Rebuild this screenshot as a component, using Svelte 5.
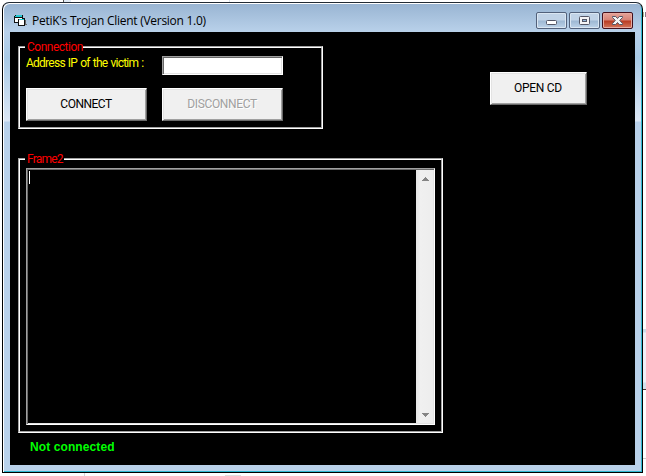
<script>
  const status = 'Not connected';
  let address = $state('');
</script>

<div class="desktop">
  <i class="scrap" style="left:63px;top:0;width:1px;height:3px;background:#555"></i>
  <i class="scrap" style="left:64px;top:0;width:7px;height:3px;background:#e0eaf4"></i>
  <i class="scrap" style="left:229px;top:0;width:1px;height:3px;background:#dce4ee"></i>
  <i class="scrap" style="left:643px;top:12px;width:1px;height:5px;background:#a9bd9b"></i>
  <i class="scrap" style="left:645px;top:12px;width:1px;height:5px;background:#8c7588"></i>
  <i class="scrap" style="left:643px;top:329px;width:3px;height:60px;background:linear-gradient(#cbdce9 0 3px,#f0f0f8 4px 53px,#d3e0ec 54px)"></i>
  <i class="scrap" style="left:643px;top:389px;width:3px;height:1px;background:#433"></i>
  <i class="scrap" style="left:643px;top:458px;width:3px;height:1px;background:#ccc"></i>
  <i class="scrap" style="left:84px;top:473px;width:1px;height:3px;background:#d5d5dc"></i>
  <i class="scrap" style="left:225px;top:475px;width:16px;height:1px;background:#ddd"></i>

  <div class="window">
    <header>
      <svg class="app-icon" width="14" height="14" viewBox="0 0 14 14" shape-rendering="crispEdges">
        <path d="M1 1h8v3h2v8H4V9H0V2h1z" fill="#111" />
        <path d="M2 1h6v1H2zM1 2h7v1H1z" fill="#22c9d4" />
        <path d="M1 4h7v1H4v3H1z" fill="#fff" />
        <path d="M5 5h5v1H5z" fill="#22c9d4" />
        <path d="M5 6h5v5H5z" fill="#fff" />
        <path d="M11 6h1v5h-1zM12 10h1v1h-1z" fill="#666" />
      </svg>
      <span class="title">PetiK's Trojan Client (Version 1.0)</span>
      <div class="controls">
        <button aria-label="Minimize">
          <svg width="31" height="17"><rect x="10.5" y="8.5" width="10" height="4" rx="1" fill="#fff" stroke="#535666" /></svg>
        </button>
        <button aria-label="Maximize">
          <svg width="31" height="17"><rect x="10.5" y="4.5" width="10" height="8" rx="1" fill="#f4f4f6" stroke="#535666" /><rect x="13.5" y="7.5" width="4" height="2" fill="#91b5d8" stroke="#535666" /></svg>
        </button>
        <button class="close" aria-label="Close">
          <svg width="31" height="17"><path d="M10.5 4.5h3.2l1.8 2 1.8-2h3.2v1L17.7 8.4l2.8 3.1v1h-3.2l-1.8-2-1.8 2h-3.2v-1l2.8-3.1-2.8-2.9z" fill="#f5f5f5" stroke="#535666" /></svg>
        </button>
      </div>
    </header>

    <main>
      <div class="top">
        <section class="frame connection">
          <h2 class="c1"><span>Connection</span></h2>
          <label for="ip"><span>Address IP of the victim :</span></label>
          <input id="ip" bind:value={address} />
          <button class="btn"><span class="t-connect">CONNECT</span></button>
          <button class="btn" disabled><span class="t-disconnect">DISCONNECT</span></button>
        </section>
        <button class="btn cd"><span class="t-cd">OPEN CD</span></button>
      </div>
      <section class="frame output">
        <h2 class="c2"><span>Frame2</span></h2>
        <div class="console">
          <div class="page"><i class="caret"></i></div>
          <div class="scroll">
            <svg width="17" height="17" shape-rendering="crispEdges"><path d="M9 7h1v1h1v1h1v1h1v1H6v-1h1V9h1V8h1z" fill="#858585" /></svg>
            <svg width="17" height="17" shape-rendering="crispEdges"><path d="M6 7h7v1h-1v1h-1v1h-1v1H9v-1H8V9H7V8H6z" fill="#858585" /></svg>
          </div>
        </div>
      </section>
      <p class="status">{status}</p>
    </main>
  </div>
</div>

<style>
  :global(body) { margin: 0; background: #fff; }
  .desktop, .desktop * { box-sizing: border-box; }
  .desktop {
    position: relative;
    width: 646px;
    height: 476px;
    padding: 2px 3px 3px 2px;
    overflow: hidden;
    background: #fff;
    font-family: Roboto, "Liberation Sans", Arial, sans-serif;
    font-size: 12px;
  }
  .scrap { position: absolute; }
  .window {
    position: relative;
    width: 641px;
    height: 471px;
    border: 1px solid #000;
    border-top-color: #222b35;
    border-radius: 7px 7px 0 0;
    padding: 1px 7px 7px 7px;
    background: linear-gradient(#98b4d2 0, #b9d1ea 29px, #a9cae6 55px, #dce7f5 118px, #b9d1ea 119px);
    box-shadow: inset 1px 1px #fff, inset -1px -1px #2fb9d2;
  }
  header { display: flex; height: 28px; align-items: flex-start; padding-left: 4px; }
  .app-icon { margin-top: 10px; flex: none; }
  .title {
    margin: 8px 0 0 4px;
    font: 12px/17px "Open Sans", "Noto Sans", sans-serif;
    letter-spacing: -0.27px;
    color: #000;
    white-space: nowrap;
  }
  .controls { display: flex; gap: 2px; margin: 8px 2px 0 auto; }
  .controls button {
    width: 31px;
    height: 17px;
    padding: 0;
    border: 1px solid #52617b;
    border-radius: 2px;
    background: linear-gradient(#c1d3e7 0 7px, #9eb8d3 8px, #bdd3e9);
    box-shadow: inset 0 0 0 1px #dae6f2;
  }
  .controls svg { display: block; margin: -1px; }
  .controls .close {
    border-color: #43101c;
    background: linear-gradient(#e5a49a 0, #d88376 7px, #b93b22 8px, #d3765c);
    box-shadow: inset 0 0 0 1px #e7aaa0;
  }
  main { height: 433px; background: #000; padding: 14px 8px 0; }
  .top { display: flex; height: 112px; align-items: flex-start; }
  .frame { border: 1px solid; border-color: #a0a0a0 #fff #fff #a0a0a0; position: relative; }
  .frame::before {
    content: "";
    position: absolute;
    inset: 0;
    border: 1px solid;
    border-color: #fff #a0a0a0 #a0a0a0 #fff;
    pointer-events: none;
  }
  h2 {
    position: absolute;
    left: 6px;
    top: -7px;
    margin: 0;
    padding-left: 2px;
    height: 14px;
    background: #000;
    color: #f00;
    font-size: 12px;
    font-weight: 400;
    line-height: 14px;
    white-space: nowrap;
  }
  .c1 { width: 58px; letter-spacing: -0.5px; }
  .c2 { width: 39px; letter-spacing: -0.8px; }
  .connection {
    width: 305px;
    height: 83px;
    padding: 9px 0 0 7px;
    display: grid;
    grid-template-columns: 121px 121px;
    grid-template-rows: 19px 33px;
    gap: 13px 15px;
  }
  label { color: #ff0; line-height: 14px; letter-spacing: -0.75px; word-spacing: 0.8px; white-space: nowrap; }
  input {
    width: 121px;
    height: 19px;
    border: 1px solid;
    border-color: #a0a0a0 #fff #fff #a0a0a0;
    box-shadow: inset 1px 1px #696969, inset -1px -1px #e3e3e3;
    background: #fff;
    padding: 2px 4px;
    outline: 0;
  }
  .btn {
    width: 121px;
    height: 33px;
    padding: 0 1px 1px 0;
    border: 1px solid;
    border-color: #fff #696969 #696969 #fff;
    box-shadow: inset 1px 1px #e3e3e3, inset -1px -1px #a0a0a0;
    background: #f0f0f0;
    color: #000;
    font: 12px/14px Roboto, "Liberation Sans", Arial, sans-serif;
    white-space: nowrap;
  }
  .btn:disabled { color: #a0a0a0; text-shadow: 1px 1px #fff; }
  .btn span { display: inline-block; }
  .t-connect { letter-spacing: -0.5px; }
  .t-disconnect { letter-spacing: -0.35px; }
  .t-cd { letter-spacing: -0.3px; }
  .cd { width: 97px; margin: 26px 0 0 167px; }
  .output { width: 425px; height: 275px; padding: 9px 0 0 7px; }
  .console {
    width: 409px;
    height: 257px;
    display: flex;
    padding: 1px;
    border: 1px solid;
    border-color: #a0a0a0 #fff #fff #a0a0a0;
    box-shadow: inset 1px 1px #696969, inset -1px -1px #e3e3e3;
  }
  .page { flex: 1; padding: 1px; }
  .caret { display: block; width: 1px; height: 13px; background: #fff; }
  .scroll {
    width: 17px;
    display: flex;
    flex-direction: column;
    justify-content: space-between;
    background: linear-gradient(90deg, #e6e6e6, #f0f0f0 4px, #ededed);
  }
  .status {
    margin: 7px 0 0 12px;
    color: #0f0;
    font-family: "Liberation Sans", Arial, sans-serif;
    font-size: 12px;
    letter-spacing: 0.1px;
    font-weight: 700;
    line-height: 14px;
  }
</style>
